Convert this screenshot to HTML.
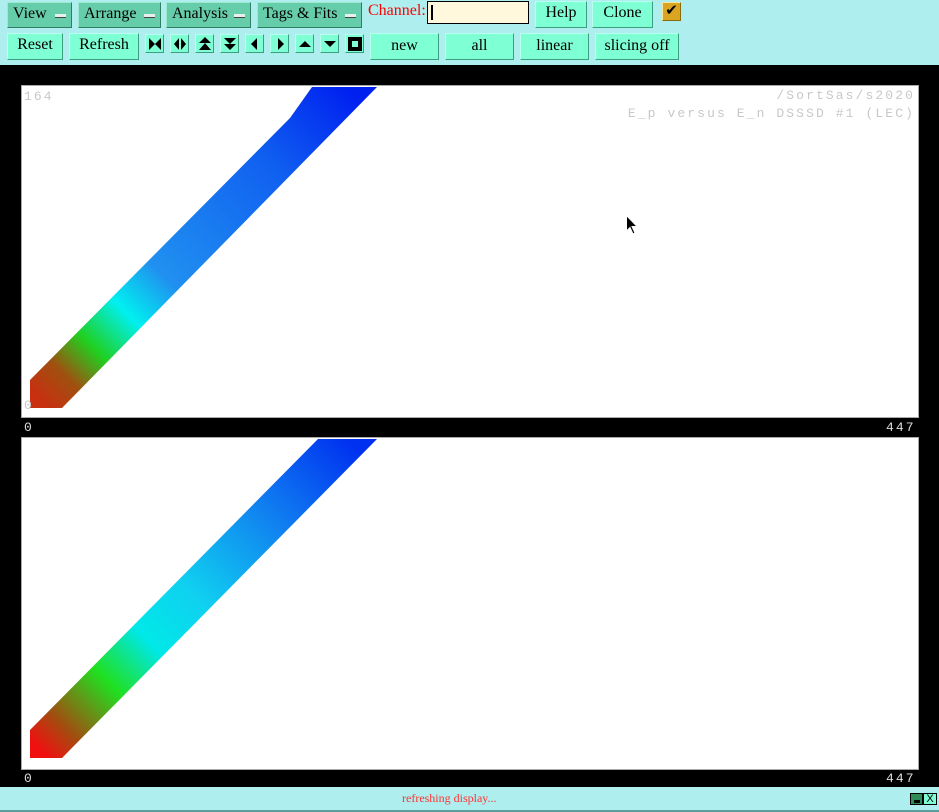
<!DOCTYPE html>
<html><head><style>
*{margin:0;padding:0;box-sizing:border-box}
body{width:939px;height:812px;background:#afeeee;position:relative;overflow:hidden;font-family:"Liberation Serif",serif;font-size:16px;color:#000}
.b{position:absolute;background:#7fffd4;border:1px solid;border-color:#b8fff0 #3a9f80 #3a9f80 #b8fff0;text-align:center;line-height:21px}
.m{background:#66cdaa;border-color:#9fe8cf #2e7d64 #2e7d64 #9fe8cf;text-align:left;padding-left:5px}
.m i{position:absolute;right:5px;top:11px;width:11px;height:4px;background:#e8f0ee;border-bottom:1px solid #444}
.ic{position:absolute;top:34px;width:19px;height:19px;background:#7fffd4;border:1px solid;border-color:#b8fff0 #3a9f80 #3a9f80 #b8fff0}
.ic svg{position:absolute;left:2px;top:2px}
.mono{position:absolute;font-family:"Liberation Mono",monospace;font-size:13px;letter-spacing:2.1px;color:#c8c8c8}
.w{position:absolute;font-family:"Liberation Mono",monospace;font-size:13px;letter-spacing:2.1px;color:#ddd}
</style></head><body>
<div class="b m" style="left:7px;top:2px;width:65px;height:26px">View<i></i></div>
<div class="b m" style="left:78px;top:2px;width:83px;height:26px">Arrange<i></i></div>
<div class="b m" style="left:166px;top:2px;width:85px;height:26px">Analysis<i></i></div>
<div class="b m" style="left:257px;top:2px;width:105px;height:26px">Tags &amp; Fits<i></i></div>
<div style="position:absolute;left:368px;top:1px;color:#f00;line-height:20px">Channel:</div>
<div style="position:absolute;left:427px;top:1px;width:102px;height:23px;background:#fff8dc;border:1px solid #000"><div style="position:absolute;left:3px;top:3px;width:2px;height:15px;background:#000"></div></div>
<div class="b" style="left:535px;top:1px;width:52px;height:27px">Help</div>
<div class="b" style="left:592px;top:1px;width:61px;height:27px">Clone</div>
<div style="position:absolute;left:662px;top:2px;width:19px;height:19px;background:#daa520;border:1px solid;border-color:#f5e6a8 #8a6a10 #8a6a10 #f5e6a8;font-size:15px;line-height:16px;text-align:center">✔</div>

<div class="b" style="left:7px;top:33px;width:56px;height:27px;line-height:22px">Reset</div>
<div class="b" style="left:69px;top:33px;width:70px;height:27px;line-height:22px">Refresh</div>
<div class="ic" style="left:145px"><svg width="14" height="14"><path d="M1 1L7 7L1 13ZM13 1L7 7L13 13Z"/></svg></div>
<div class="ic" style="left:170px"><svg width="14" height="14"><path d="M6 1L1 7L6 13ZM8 1L13 7L8 13Z"/></svg></div>
<div class="ic" style="left:195px"><svg width="14" height="14"><path d="M7 0L13 6H1ZM7 6L13 13H1Z"/></svg></div>
<div class="ic" style="left:220px"><svg width="14" height="14"><path d="M1 1H13L7 7ZM1 7H13L7 13Z"/></svg></div>
<div class="ic" style="left:245px"><svg width="14" height="14"><path d="M9 1V13L3 7Z"/></svg></div>
<div class="ic" style="left:270px"><svg width="14" height="14"><path d="M5 1V13L11 7Z"/></svg></div>
<div class="ic" style="left:295px"><svg width="14" height="14"><path d="M1 10H13L7 4Z"/></svg></div>
<div class="ic" style="left:320px"><svg width="14" height="14"><path d="M1 4H13L7 10Z"/></svg></div>
<div class="ic" style="left:345px"><svg width="14" height="14"><path d="M0 0H14V14H0ZM4 4V10H10V4Z" fill-rule="evenodd"/></svg></div>
<div class="b" style="left:370px;top:33px;width:69px;height:27px;line-height:24px">new</div>
<div class="b" style="left:445px;top:33px;width:69px;height:27px;line-height:24px">all</div>
<div class="b" style="left:520px;top:33px;width:69px;height:27px;line-height:24px">linear</div>
<div class="b" style="left:595px;top:33px;width:84px;height:27px;line-height:24px">slicing off</div>

<div style="position:absolute;left:0;top:65px;width:939px;height:722px;background:#000"></div>
<svg style="position:absolute;left:0;top:0" width="939" height="812">
<defs>
<linearGradient id="g1" gradientUnits="userSpaceOnUse" x1="40" y1="400" x2="350" y2="90">
<stop offset="0" stop-color="#c83010"/><stop offset="0.08" stop-color="#a05010"/><stop offset="0.17" stop-color="#20d020"/><stop offset="0.28" stop-color="#00f0f0"/><stop offset="0.4" stop-color="#2090f0"/><stop offset="0.75" stop-color="#1060f0"/><stop offset="1" stop-color="#0020f0"/>
</linearGradient>
<linearGradient id="g2" gradientUnits="userSpaceOnUse" x1="40" y1="750" x2="350" y2="440">
<stop offset="0" stop-color="#f01010"/><stop offset="0.08" stop-color="#a05010"/><stop offset="0.22" stop-color="#20e020"/><stop offset="0.35" stop-color="#00e8e8"/><stop offset="0.5" stop-color="#10d0f0"/><stop offset="0.75" stop-color="#1080f0"/><stop offset="1" stop-color="#0030f0"/>
</linearGradient>
</defs>
<rect x="21.5" y="85.5" width="897" height="332" fill="#fff" stroke="#aaa"/>
<polygon points="30,380 30,408 62,408 377,87 312,87 290,118" fill="url(#g1)"/>
<rect x="21.5" y="437.5" width="897" height="332" fill="#fff" stroke="#aaa"/>
<polygon points="30,730 30,758 62,758 377,439 318,439" fill="url(#g2)"/>
</svg>
<div class="mono" style="left:24px;top:89px">164</div>
<div class="mono" style="left:24px;top:398px">0</div>
<div class="mono" style="right:24px;top:88px">/SortSas/s2020</div>
<div class="mono" style="right:24px;top:106px">E_p versus E_n DSSSD #1 (LEC)</div>
<div class="w" style="left:24px;top:420px">0</div>
<div class="w" style="left:886px;top:420px">447</div>
<div class="w" style="left:24px;top:771px">0</div>
<div class="w" style="left:886px;top:771px">447</div>
<svg style="position:absolute;left:626px;top:215px" width="12" height="20"><path d="M0.5 0.5V16L4 12.5L7 19L9 18L6 11.5H11Z" fill="#000" stroke="#fff"/></svg>
<div style="position:absolute;left:402px;top:790px;color:#f33;font-size:12px;line-height:16px">refreshing display...</div>
<div style="position:absolute;left:910px;top:793px;width:13px;height:12px;background:#2e8b57;border:1px solid #000"><div style="position:absolute;left:3px;top:6px;width:6px;height:3px;background:#000"></div></div>
<div style="position:absolute;left:923px;top:793px;width:14px;height:12px;background:#7fffd4;border:1px solid #000;font-family:'Liberation Sans',sans-serif;font-size:11px;line-height:10px;text-align:center">X</div>
<div style="position:absolute;left:0;top:810px;width:939px;height:2px;background:#5a9e9e"></div>
</body></html>
